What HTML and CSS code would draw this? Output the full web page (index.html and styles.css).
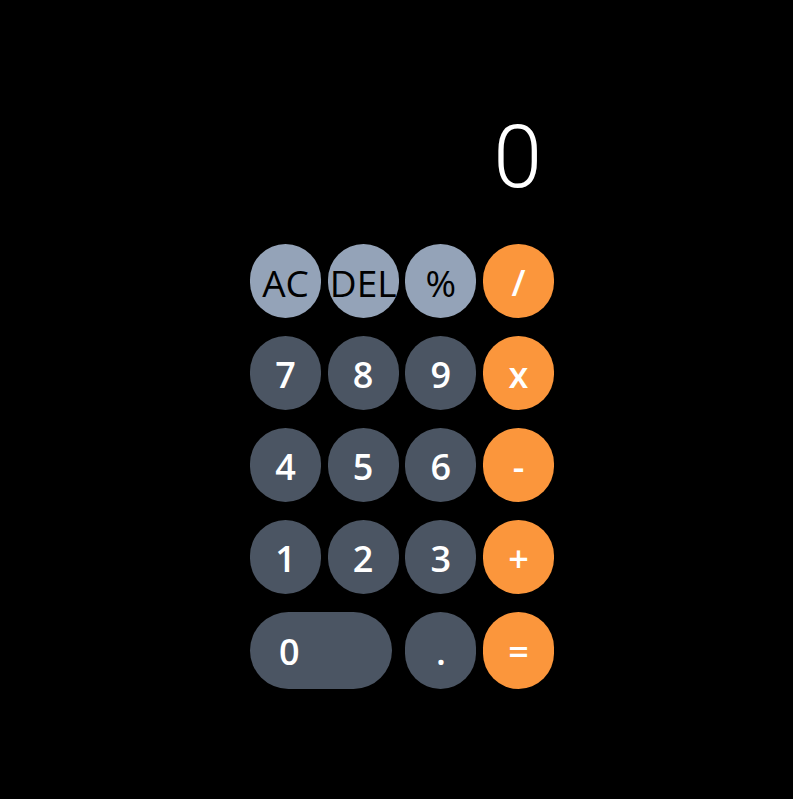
FILE: index.html
```html
<!DOCTYPE html>
<html lang="en">
<head>
    <meta charset="UTF-8">
    <meta name="viewport" content="width=device-width, initial-scale=1.0">
    <title>Calculator</title>
    <link rel="stylesheet" href="styles.css">
</head>
<body>
    <div class="calculator">
        <div class="display" id="display">0</div>
        <div class="keys">
            <button class="key func">AC</button>
            <button class="key func">DEL</button>
            <button class="key func">%</button>
            <button class="key op">/</button>

            <button class="key num">7</button>
            <button class="key num">8</button>
            <button class="key num">9</button>
            <button class="key op">x</button>

            <button class="key num">4</button>
            <button class="key num">5</button>
            <button class="key num">6</button>
            <button class="key op">-</button>

            <button class="key num">1</button>
            <button class="key num">2</button>
            <button class="key num">3</button>
            <button class="key op">+</button>

            <button class="key num zero">0</button>
            <button class="key num">.</button>
            <button class="key op">=</button>
        </div>
    </div>
</body>
</html>
```

FILE: styles.css
```css
:root {
    --bg-color: #000000;
    --func-color: #94a3b8;
    --num-color: #4b5563;
    --op-color: #fb963c;
    --key-size: 71px;
}

* {
    margin: 0;
    padding: 0;
    box-sizing: border-box;
}

body {
    background-color: var(--bg-color);
    font-family: 'Open Sans', 'Noto Sans', sans-serif;
    color: #ffffff;
    height: 100vh;
}

.calculator {
    width: 315px;
    margin: 0 auto;
    padding-left: 11px;
    padding-top: 113px;
}

.display {
    font-family: Roboto, 'Open Sans', sans-serif;
    font-size: 88px;
    font-weight: 300;
    line-height: 1;
    text-align: right;
    padding-right: 12px;
    margin-bottom: 43px;
}

.keys {
    display: grid;
    grid-template-columns: repeat(4, var(--key-size));
    grid-template-rows: repeat(4, 74px) 77px;
    column-gap: 6.67px;
    row-gap: 18px;
}

.key {
    border: none;
    border-radius: 9999px;
    font-family: inherit;
    font-size: 36px;
    font-weight: 600;
    color: #ffffff;
    display: flex;
    align-items: center;
    justify-content: center;
    padding-top: 2px;
    cursor: pointer;
    white-space: nowrap;
    overflow: visible;
}

.key.func {
    background-color: var(--func-color);
    color: #000000;
    font-weight: 500;
    font-size: 37px;
}

.key.num {
    background-color: var(--num-color);
}

.key.op {
    background-color: var(--op-color);
}

.key.zero {
    grid-column: span 2;
    width: 142px;
    justify-content: flex-start;
    padding-left: 29px;
}
```
